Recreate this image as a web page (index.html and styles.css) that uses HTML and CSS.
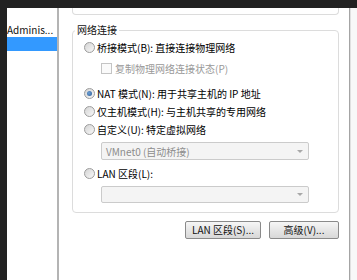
FILE: index.html
```html
<!DOCTYPE html>
<html lang="zh-CN">

<head>
    <meta charset="UTF-8">
    <meta name="viewport" content="width=device-width, initial-scale=1.0">
    <title>虚拟机设置 - 网络适配器</title>

    <link rel="stylesheet" href="styles.css">
</head>

<body>

    <div class="desk">
        <div class="window">
            <div class="sidebar">
                <div class="sidebar__item">Adminis...</div>
                <div class="sidebar__item active"></div>
            </div>

            <div class="content">
                <div class="prev-group"></div>

                <fieldset class="group">
                    <legend class="group__title">网络连接</legend>
                    <div class="group__body">
                        <div class="option">
                            <span class="radio"></span>
                            <span>桥接模式(B): 直接连接物理网络</span>
                        </div>
                        <div class="option option--sub option--disabled">
                            <span class="checkbox"></span>
                            <span>复制物理网络连接状态(P)</span>
                        </div>
                        <div class="option option--nat">
                            <span class="radio checked"></span>
                            <span>NAT 模式(N): 用于共享主机的 IP 地址</span>
                        </div>
                        <div class="option">
                            <span class="radio"></span>
                            <span>仅主机模式(H): 与主机共享的专用网络</span>
                        </div>
                        <div class="option">
                            <span class="radio"></span>
                            <span>自定义(U): 特定虚拟网络</span>
                        </div>
                        <div class="combo">
                            <span>VMnet0 (自动桥接)</span>
                            <span class="combo__arrow"></span>
                        </div>
                        <div class="option option--lan">
                            <span class="radio"></span>
                            <span>LAN 区段(L):</span>
                        </div>
                        <div class="combo combo--empty">
                            <span></span>
                            <span class="combo__arrow"></span>
                        </div>
                    </div>
                </fieldset>

                <div class="buttons">
                    <div class="button button--lan">LAN 区段(S)...</div>
                    <div class="button button--adv">高级(V)...</div>
                </div>
            </div>

            <div class="edge"></div>
        </div>
    </div>

</body>

</html>
```

FILE: styles.css
```css
body {
    margin: 0;
    font-family: "Noto Sans CJK SC", sans-serif;
    font-size: 10px;
    color: #000;
}

.desk {
    height: 280px;
    padding: 8px 0 0 7px;
    box-sizing: border-box;
    background-color: #222;
    overflow: hidden;
}

.window {
    display: flex;
    height: 272px;
    background-color: #fff;
}

.sidebar {
    width: 50px;
    padding-top: 15px;
    border-right: 2px solid #b4b4b4;
    background-color: #fff;
    overflow: hidden;
}

.sidebar__item {
    height: 14px;
    line-height: 14px;
    white-space: nowrap;
    color: #111;
}

.sidebar__item.active {
    background-color: #3399ff;
}

.content {
    flex: 1;
    padding: 0 10px 0 13px;
}

.prev-group {
    height: 6px;
    border: 1px solid #dcdcdc;
    border-top: none;
    border-radius: 0 0 4px 4px;
}

.group {
    margin: 9px 0 0;
    padding: 0;
    border: 1px solid #dcdcdc;
    border-radius: 4px;
    min-inline-size: 0;
}

.group__title {
    margin-left: 2px;
    padding: 0 2px;
    line-height: 12px;
    color: #111;
}

.group__body {
    padding: 2px 0 9px 11px;
}

.option {
    display: flex;
    align-items: center;
    gap: 2px;
    height: 18px;
    white-space: nowrap;
}

.option--sub {
    margin-top: 3px;
    padding-left: 17px;
    gap: 3px;
}

.option--disabled {
    color: #999;
}

.option--nat {
    margin-top: 7px;
}

.option--lan {
    margin-top: 4px;
}

.radio {
    width: 9px;
    height: 9px;
    border: 1px solid #9c9c9c;
    border-radius: 50%;
    background: linear-gradient(135deg, #d4d4d4, #f8f8f8);
    display: flex;
    align-items: center;
    justify-content: center;
    flex-shrink: 0;
}

.radio.checked::after {
    content: "";
    width: 5px;
    height: 5px;
    border-radius: 50%;
    background: radial-gradient(circle at 40% 40%, #6b9fd6, #2c5b93);
}

.checkbox {
    width: 9px;
    height: 9px;
    border: 1px solid #c4c4c4;
    background-color: #fafafa;
    flex-shrink: 0;
}

.combo {
    display: flex;
    align-items: center;
    justify-content: space-between;
    width: 208px;
    height: 18px;
    margin: 4px 0 0 17px;
    padding: 0 5px 0 4px;
    box-sizing: border-box;
    border: 1px solid #cbcbcb;
    border-radius: 2px;
    background-color: #f4f4f4;
    color: #8c8c8c;
    white-space: nowrap;
}

.combo--empty {
    height: 17px;
}

.combo__arrow {
    width: 0;
    height: 0;
    border-left: 3px solid transparent;
    border-right: 3px solid transparent;
    border-top: 3px solid #a8a8a8;
}

.buttons {
    display: flex;
    justify-content: flex-end;
    gap: 8px;
    margin-top: 8px;
}

.button {
    height: 18px;
    box-sizing: border-box;
    border: 1px solid #8a8a8a;
    border-radius: 2px;
    background: linear-gradient(#f6f6f6, #e6e6e6 50%, #d8d8d8);
    line-height: 16px;
    text-align: center;
    white-space: nowrap;
    color: #111;
}

.button--lan {
    width: 76px;
}

.button--adv {
    width: 70px;
}

.edge {
    width: 7px;
    border-left: 1px solid #a4a4a4;
    box-shadow: inset 1px 0 0 #e0e0e0;
    background-color: #f8f8f8;
}
```
